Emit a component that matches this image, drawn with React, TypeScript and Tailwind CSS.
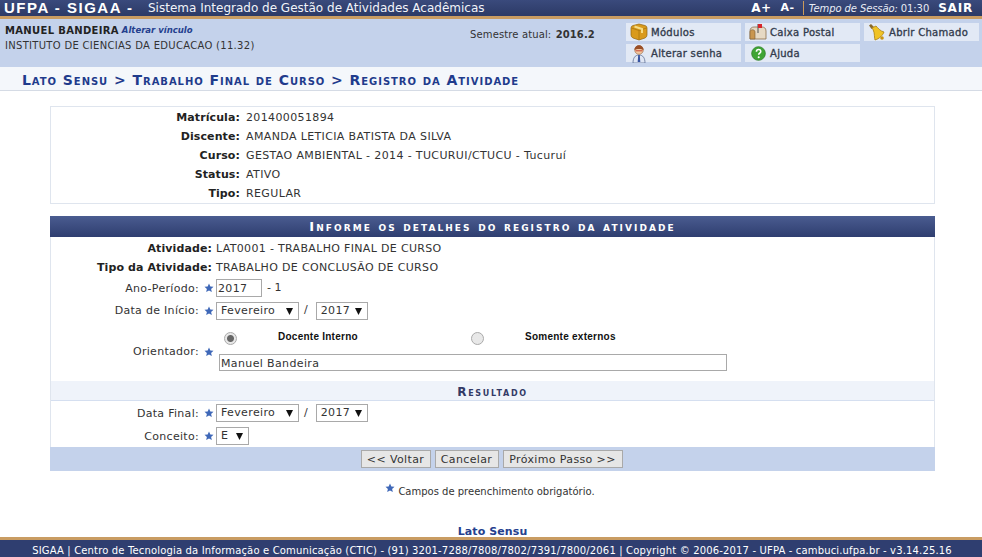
import type { ReactNode } from "react";

const verdana = "font-['DejaVu_Sans',Verdana,sans-serif]";

function Star() {
  return (
    <svg className="h-[10px] w-[10px] shrink-0" viewBox="0 0 20 20">
      <path d="M10 1l2.7 6 6.3.6-4.8 4.2 1.5 6.4L10 14.8l-5.7 3.4 1.5-6.4L1 7.600 7.300 7z" fill="#3f68b8" />
    </svg>
  );
}

function BoxIcon() {
  return (
    <svg className="h-[18px] w-[18px]" viewBox="0 0 18 18">
      <path d="M1 5q0-2 2-2.500l6-1.500 6 1.500q2 .5 2 2.500v7q0 2-2 3l-6 2-6-2q-2-1-2-3z" fill="#d99a1c" stroke="#94660f" strokeWidth="0.7" />
      <path d="M1.500 5l7.500 2.500 7.500-2.500M9 7.500V17" fill="none" stroke="#a8760f" strokeWidth="0.8" />
      <path d="M4.500 3.500l7.500 2.500v4" fill="none" stroke="#f6dc84" strokeWidth="2" />
    </svg>
  );
}

function MailIcon() {
  return (
    <svg className="h-[18px] w-[18px]" viewBox="0 0 18 18">
      <path d="M1 8c0-3 2-4 4-4h8c2 0 4 1 4 4v8H1z" fill="#e6d9c4" stroke="#8a6d4a" strokeWidth="0.8" />
      <path d="M1 9c0-3 5-3 5 0v7H1z" fill="#c9964f" stroke="#7a5a34" strokeWidth="0.6" />
      <path d="M9 1v9" stroke="#666" strokeWidth="1.200" />
      <path d="M9 1h4v4H9z" fill="#d8252b" />
    </svg>
  );
}

function BellIcon() {
  return (
    <svg className="h-[18px] w-[18px]" viewBox="0 0 18 18">
      <path d="M1 2.500l2-1.500 3 3-2.500 2z" fill="#8a6a2a" />
      <path d="M4 5l4-2c2 2 4 5 8 6-1 3-5 7-9 8-1-4 0-8-3-12z" fill="#f0c326" stroke="#a97f10" strokeWidth="0.8" />
      <circle cx="14" cy="15" r="1.800" fill="#c9930f" />
    </svg>
  );
}

function PersonIcon() {
  return (
    <svg className="h-[19px] w-[18px]" viewBox="0 0 18 19">
      <path d="M3 19c0-5 2-8 6-8s6 3 6 8z" fill="#dfe6f4" stroke="#5d6f94" strokeWidth="0.8" />
      <path d="M8.200 11h1.600l.5 7H7.700z" fill="#3552a0" />
      <circle cx="9" cy="6" r="4.300" fill="#f2c7a0" stroke="#9a6a45" strokeWidth="0.6" />
      <path d="M4.500 6c0-6.500 9-6.500 9 0-2-1.500-7-1.500-9 0z" fill="#9a4f26" />
      <path d="M5.500 6.800h7" stroke="#c23b2a" strokeWidth="0.9" />
    </svg>
  );
}

function HelpIcon() {
  return (
    <svg className="h-[15px] w-[15px]" viewBox="0 0 16 16">
      <circle cx="8" cy="8" r="7.300" fill="#3fa535" stroke="#2b7d26" strokeWidth="0.8" />
      <path d="M5.800 6c0-3 4.600-3 4.600-.2 0 1.800-2.200 1.800-2.200 3.600" fill="none" stroke="#fff" strokeWidth="1.700" />
      <circle cx="8.200" cy="12" r="1.100" fill="#fff" />
    </svg>
  );
}

function MenuButton({ icon, label }: { icon: ReactNode; label: string }) {
  return (
    <div className="flex h-[18px] items-center bg-[#e2e9f5]">
      <div className="flex w-[25px] shrink-0 justify-center pl-[1px]">{icon}</div>
      <span className="text-[10px] tracking-[0.3px] text-[#333c4d] [-webkit-text-stroke:0.35px_#333c4d]">{label}</span>
    </div>
  );
}

function InfoRow({ label, value }: { label: string; value: string }) {
  return (
    <div className="flex h-[19px] items-center">
      <span className="w-[189px] text-right font-bold tracking-[0.1px] text-[#222]">{label}</span>
      <span className="pl-[6px] tracking-[0.37px] text-[#333]">{value}</span>
    </div>
  );
}

function FormRow({ label, children, height }: { label: string; children: ReactNode; height: string }) {
  return (
    <div className={`flex items-center ${height}`}>
      <span className="w-[148px] shrink-0 pt-[2px] text-right tracking-[0.3px] text-[#333]">{label}</span>
      <span className="flex w-[17px] shrink-0 justify-center pl-[3px]">
        <Star />
      </span>
      {children}
    </div>
  );
}

function Select({ value, width }: { value: string; width: string }) {
  return (
    <span className={`flex h-[18px] items-center justify-between border border-[#a9a9a9] bg-white pt-[1px] pr-[5px] pl-[4px] tracking-[0.37px] text-[#333] ${width}`}>
      {value}
      <svg className="h-[7px] w-[7px]" viewBox="0 0 7 7">
        <path d="M0 0h7L3.500 7z" fill="#111" />
      </svg>
    </span>
  );
}

export default function App() {
  return (
    <div className={`flex h-[557px] w-[982px] flex-col overflow-hidden bg-white text-[11px] ${verdana}`}>
      <header className="flex h-[16px] shrink-0 items-center justify-between bg-gradient-to-b from-[#3a4a7c] to-[#2c3a66] pr-[9px] pl-[4px] text-white">
        <div className="flex items-center">
          <span className="w-[144px] font-['Liberation_Sans',Arial,sans-serif] text-[15px] font-bold tracking-[1.5px]">UFPA - SIGAA -</span>
          <span className="text-[12px] text-[#f0f3f9]">Sistema Integrado de Gestão de Atividades Acadêmicas</span>
        </div>
        <div className="flex items-center">
          <span className="mr-[9px] text-[12px] font-bold tracking-[0.4px]">A+</span>
          <span className="mr-[8px] text-[11px] font-bold tracking-[0.6px]">A-</span>
          <span className="mr-[5px] h-[14px] border-l border-[#c99a5a]" />
          <span className="mr-[9px] text-[10px] tracking-[-0.1px] text-[#e8ecf5]">
            <em>Tempo de Sessão:</em> 01:30
          </span>
          <span className="text-[12px] font-bold tracking-[0.8px]">SAIR</span>
        </div>
      </header>
      <div className="h-[3px] shrink-0 bg-[#c99c62]" />

      <div className="flex h-[48px] shrink-0 bg-[#c4d2eb]">
        <div className="w-[470px] pt-[4px] pl-[5px] text-[10px] text-[#333]">
          <div className="flex h-[15px] items-center">
            <b className="tracking-[0.33px] text-[#222]">MANUEL BANDEIRA</b>
            <i className="ml-[3px] text-[8.5px] font-bold text-[#24408e]">Alterar vínculo</i>
          </div>
          <div className="flex h-[15px] items-center tracking-[0.3px]">INSTITUTO DE CIENCIAS DA EDUCACAO (11.32)</div>
        </div>
        <div className="w-[156px] pt-[8px] text-[10px] tracking-[0.13px] text-[#333]">
          Semestre atual: <b className="ml-[1px] tracking-[0.1px]">2016.2</b>
        </div>
        <div className="grid grid-cols-[115px_115px_115px] content-start gap-x-[4px] gap-y-[3px] pt-[4px]">
          <MenuButton icon={<BoxIcon />} label="Módulos" />
          <MenuButton icon={<MailIcon />} label="Caixa Postal" />
          <MenuButton icon={<BellIcon />} label="Abrir Chamado" />
          <MenuButton icon={<PersonIcon />} label="Alterar senha" />
          <MenuButton icon={<HelpIcon />} label="Ajuda" />
        </div>
      </div>

      <div className="flex h-[24px] shrink-0 items-center border-b border-[#d5dbe5] bg-[#f4f7fb] pt-[3px] pl-[22px] text-[14px] font-bold tracking-[0.95px] text-[#1f3b8c] [font-variant:small-caps]">
        Lato Sensu &gt; Trabalho Final de Curso &gt; Registro da Atividade
      </div>

      <main className="mx-[50px] mt-[15px] flex-1">
        <section className="h-[98px] w-[885px] border border-[#dfe5ee] pt-[2px]">
          <InfoRow label="Matrícula:" value="201400051894" />
          <InfoRow label="Discente:" value="AMANDA LETICIA BATISTA DA SILVA" />
          <InfoRow label="Curso:" value="GESTAO AMBIENTAL - 2014 - TUCURUI/CTUCU - Tucuruí" />
          <InfoRow label="Status:" value="ATIVO" />
          <InfoRow label="Tipo:" value="REGULAR" />
        </section>

        <section className="mt-[12px] w-[885px] border-x border-[#dfe5ee]">
          <h2 className="-mx-[1px] flex h-[21px] items-center justify-center bg-gradient-to-b from-[#4a5c90] to-[#2f3e70] text-[13px] font-bold tracking-[2.050px] text-white [font-variant:small-caps]">
            Informe os detalhes do registro da atividade
          </h2>

          <div className="flex h-[20px] items-center pt-[5px]">
            <span className="w-[161px] text-right font-bold tracking-[0.1px] text-[#222]">Atividade:</span>
            <span className="pl-[4px] tracking-[0.33px] text-[#333]">LAT0001 - TRABALHO FINAL DE CURSO</span>
          </div>
          <div className="flex h-[20px] items-center pt-[2px]">
            <span className="w-[161px] text-right font-bold tracking-[0.1px] text-[#222]">Tipo da Atividade:</span>
            <span className="pl-[4px] tracking-[0.33px] text-[#333]">TRABALHO DE CONCLUSÃO DE CURSO</span>
          </div>

          <FormRow label="Ano-Período:" height="h-[22px]">
            <input readOnly value="2017" className="h-[18px] w-[46px] border border-[#a9a9a9] px-[1px] pt-[1px] tracking-[0.37px] text-[#333]" />
            <span className="ml-[5px] text-[#333]">- 1</span>
          </FormRow>
          <FormRow label="Data de Início:" height="h-[23px]">
            <Select value="Fevereiro" width="w-[83px]" />
            <span className="mr-[8px] ml-[5px] text-[#333]">/</span>
            <Select value="2017" width="w-[52px]" />
          </FormRow>

          <div className="flex h-[59px]">
            <div className="flex w-[165px] shrink-0 items-center pt-[1px]">
              <span className="w-[148px] text-right tracking-[0.3px] text-[#333]">Orientador:</span>
              <span className="flex w-[17px] justify-center pl-[3px]">
                <Star />
              </span>
            </div>
            <div>
              <div className="flex h-[32px] items-center pl-[8px] font-['Liberation_Sans',Arial,sans-serif] text-[10px] font-bold tracking-[0.25px] text-[#111]">
                <input type="radio" readOnly checked className="h-[13px] w-[13px] appearance-none rounded-full border border-[#aaa] bg-[radial-gradient(circle,#666_3px,#e8e8e8_4px)]" />
                <span className="w-[205px] pb-[4px] pl-[41px]">Docente Interno</span>
                <input type="radio" readOnly checked={false} className="ml-[29px] h-[13px] w-[13px] appearance-none rounded-full border border-[#aaa] bg-[#e8e8e8]" />
                <span className="pb-[4px] pl-[41px]">Somente externos</span>
              </div>
              <input readOnly value="Manuel Bandeira" className="ml-[3px] block h-[17px] w-[508px] border border-[#a9a9a9] px-[1px] pt-[2px] tracking-[0.37px] text-[#333]" />
            </div>
          </div>

          <h3 className="flex h-[20px] items-center justify-center border-b border-[#d5dff0] bg-[#eff3fa] pt-[3px] text-[12px] font-bold tracking-[1.700px] text-[#333a66] [font-variant:small-caps]">
            Resultado
          </h3>

          <FormRow label="Data Final:" height="h-[24px]">
            <Select value="Fevereiro" width="w-[83px]" />
            <span className="mr-[8px] ml-[5px] text-[#333]">/</span>
            <Select value="2017" width="w-[52px]" />
          </FormRow>
          <FormRow label="Conceito:" height="h-[22px]">
            <Select value="E" width="w-[33px]" />
          </FormRow>

          <div className="-mx-[1px] flex h-[24px] items-center justify-center gap-[4px] bg-[#c4d2eb] pr-[2px]">
            <button className="h-[18px] w-[70px] border border-[#a9a9a9] bg-[#e6e6e6] pt-[1px] tracking-[0.37px] text-[#333]">&lt;&lt; Voltar</button>
            <button className="h-[18px] w-[64px] border border-[#a9a9a9] bg-[#e6e6e6] pt-[1px] tracking-[0.37px] text-[#333]">Cancelar</button>
            <button className="h-[18px] w-[120px] border border-[#a9a9a9] bg-[#e6e6e6] pt-[1px] tracking-[0.37px] text-[#333]">Próximo Passo &gt;&gt;</button>
          </div>
        </section>

        <p className="mt-[12px] flex items-start justify-center pr-[2px] text-[10px] leading-[17px] text-[#333]">
          <span className="mr-[3px]">
            <Star />
          </span>
          Campos de preenchimento obrigatório.
        </p>
      </main>

      <div className="pt-[1px] pl-[3px] text-center text-[11px] leading-[11px] font-bold tracking-[0.1px] text-[#24408e]">Lato Sensu</div>
      <div className="h-[3px] shrink-0 bg-[#c99c62]" />
      <footer className="flex h-[17px] shrink-0 items-center justify-center bg-[#2f3e70] pt-[3px] pl-[2px] text-[10px] tracking-[0.155px] text-white">
        SIGAA | Centro de Tecnologia da Informação e Comunicação (CTIC) - (91) 3201-7288/7808/7802/7391/7800/2061 | Copyright © 2006-2017 - UFPA - cambuci.ufpa.br - v3.14.25.16
      </footer>
    </div>
  );
}
